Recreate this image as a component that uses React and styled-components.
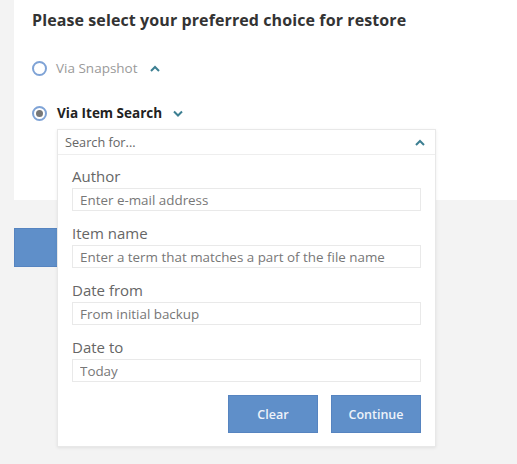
import React from 'react'
import styled, { createGlobalStyle } from 'styled-components'

const GlobalStyle = createGlobalStyle`
    body {
        margin: 0;
        background: #f3f3f3;
        font-family: "Open Sans", "Liberation Sans", sans-serif;
    }
`
const Page = styled.div`
    padding-left: 14px;
    width: 503px;
    min-height: 464px;
`
const Card = styled.section`
    height: 200px;
    box-sizing: border-box;
    padding: 9px 0 0 18px;
    background: #fff;
`
const Title = styled.h2`
    margin: 0;
    font-size: 16px;
    line-height: 22px;
    letter-spacing: 0.1px;
    font-weight: 700;
    color: #333;
`
const Options = styled.div`
    margin-top: 27px;
    display: flex;
    flex-direction: column;
    gap: 25px;
`
const Option = styled.div`
    position: relative;
    height: 20px;
    display: flex;
    align-items: center;
`
const Radio = styled.span`
    width: 15px;
    height: 15px;
    box-sizing: border-box;
    border-radius: 50%;
    border: 2px solid #7fa3d6;
    display: flex;
    align-items: center;
    justify-content: center;
    margin-right: ${({ $checked }) => ($checked ? '10px' : '9px')};
    &::after {
        content: '';
        display: ${({ $checked }) => ($checked ? 'block' : 'none')};
        width: 7px;
        height: 7px;
        border-radius: 50%;
        background: #777;
    }
`
const OptionLabel = styled.span`
    font-size: 13.5px;
    font-weight: ${({ $active }) => ($active ? 700 : 400)};
    color: ${({ $active }) => ($active ? '#222' : '#9a9a9a')};
    margin-right: ${({ $active }) => ($active ? '11px' : '12px')};
`
const Chevron = ({ up }) => (
    <svg width="10" height="7" viewBox="0 0 10 7">
        <polyline
            points={up ? '1,6 5,2 9,6' : '1,1.5 5,5.5 9,1.5'}
            fill="none"
            stroke="#3c7f92"
            strokeWidth="2"
        />
    </svg>
)
const Dropdown = styled.div`
    position: absolute;
    top: 26px;
    left: 25px;
    width: 379px;
    box-sizing: border-box;
    background: #fff;
    border: 1px solid #e8e8e8;
    box-shadow: 0 1px 3px rgba(0, 0, 0, 0.08);
    z-index: 2;
`
const DropdownHeader = styled.div`
    height: 24px;
    display: flex;
    align-items: center;
    justify-content: space-between;
    padding: 0 10px 0 7px;
    border-bottom: 1px solid #eee;
    font-size: 12.7px;
    color: #666;
`
const DropdownBody = styled.div`
    padding: 11px 14px 13px 14px;
    display: flex;
    flex-direction: column;
    gap: 12px;
`
const Field = styled.label`
    display: flex;
    flex-direction: column;
    gap: 1px;
`
const FieldLabel = styled.span`
    font-size: 15px;
    line-height: 21px;
    color: #666;
`
const Input = styled.input`
    height: 23px;
    box-sizing: border-box;
    border: 1px solid #e9e9e9;
    padding: 0 7px;
    font-family: inherit;
    font-size: 13.4px;
    color: #555;
    outline: none;
    &::placeholder {
        color: #777;
    }
`
const Actions = styled.div`
    margin-top: 1px;
    display: flex;
    justify-content: flex-end;
    gap: 13px;
`
const Button = styled.button`
    width: 90px;
    height: 38px;
    border: 1px solid #5684c0;
    background: #5f8fc9;
    color: #eef3fa;
    font-family: inherit;
    font-size: 12.5px;
    font-weight: 600;
    cursor: pointer;
`
const BehindButton = styled(Button)`
    display: block;
    margin-top: 28px;
    height: 39px;
    width: 100px;
`

export default function App() {
    return (
        <Page>
            <GlobalStyle />
            <Card>
                <Title>Please select your preferred choice for restore</Title>
                <Options>
                    <Option>
                        <Radio />
                        <OptionLabel>Via Snapshot</OptionLabel>
                        <Chevron up />
                    </Option>
                    <Option>
                        <Radio $checked />
                        <OptionLabel $active>Via Item Search</OptionLabel>
                        <Chevron />
                        <Dropdown>
                            <DropdownHeader>
                                <span>Search for...</span>
                                <Chevron up />
                            </DropdownHeader>
                            <DropdownBody>
                                <Field>
                                    <FieldLabel>Author</FieldLabel>
                                    <Input placeholder="Enter e-mail address" />
                                </Field>
                                <Field>
                                    <FieldLabel>Item name</FieldLabel>
                                    <Input placeholder="Enter a term that matches a part of the file name" />
                                </Field>
                                <Field>
                                    <FieldLabel>Date from</FieldLabel>
                                    <Input placeholder="From initial backup" />
                                </Field>
                                <Field>
                                    <FieldLabel>Date to</FieldLabel>
                                    <Input placeholder="Today" />
                                </Field>
                                <Actions>
                                    <Button>Clear</Button>
                                    <Button>Continue</Button>
                                </Actions>
                            </DropdownBody>
                        </Dropdown>
                    </Option>
                </Options>
            </Card>
            <BehindButton aria-hidden="true" tabIndex={-1} />
        </Page>
    )
}
